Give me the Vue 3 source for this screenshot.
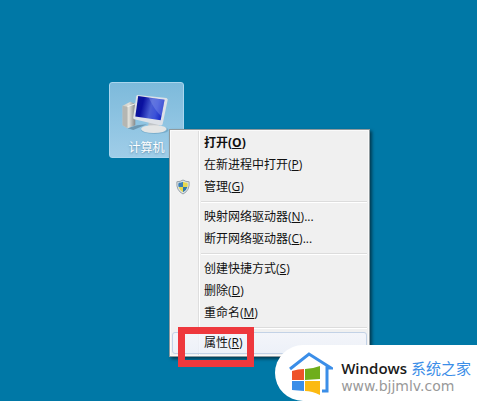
<script setup>
import { ref } from "vue";

// 右键菜单分组
const groups = [
  [
    { name: "打开", key: "O", bold: true },
    { name: "在新进程中打开", key: "P" },
    { name: "管理", key: "G", shield: true },
  ],
  [
    { name: "映射网络驱动器", key: "N", more: true },
    { name: "断开网络驱动器", key: "C", more: true },
  ],
  [
    { name: "创建快捷方式", key: "S" },
    { name: "删除", key: "D" },
    { name: "重命名", key: "M" },
  ],
  [{ name: "属性", key: "R" }],
];

// 当前高亮的菜单项
const active = ref("R");
</script>

<template>
  <main class="desktop">
    <button class="shortcut" type="button">
      <svg class="computer" viewBox="0 0 52 42" aria-hidden="true">
        <defs>
          <linearGradient id="screen" x1="0" y1="0" x2="1" y2="0.2">
            <stop offset="0" stop-color="#0b1590" />
            <stop offset="0.3" stop-color="#0a10a0" />
            <stop offset="0.6" stop-color="#4a5fd4" />
            <stop offset="0.8" stop-color="#3b52d8" />
            <stop offset="1" stop-color="#1a2cc8" />
          </linearGradient>
          <linearGradient id="tower" x1="0" y1="0" x2="1" y2="0">
            <stop offset="0" stop-color="#c9cac4" />
            <stop offset="0.5" stop-color="#e0e0da" />
            <stop offset="1" stop-color="#85898a" />
          </linearGradient>
        </defs>
        <ellipse cx="34" cy="38" rx="14" ry="4" fill="#4f86a8" opacity="0.4" />
        <path d="M6 36 L16 33 L26 32 L12 38 Z" fill="#4a6a80" opacity="0.5" />
        <path d="M1 13 L9 9 L14 11 L14 33 L6 36 L1 33 Z" fill="url(#tower)" />
        <path d="M1 13 L6 14 L6 36 L1 33 Z" fill="#b4b6b2" />
        <path d="M6 14 L14 11" stroke="#f5f5f0" fill="none" />
        <path d="M28 28 L38 30 L39 37 L27 36 Z" fill="#c2c6c9" />
        <ellipse cx="33" cy="37" rx="13" ry="4" fill="#e3e5e5" />
        <path d="M16 2 L46 5 Q48 6 47 8 L42 32 Q41 34 39 33 L13 27 Q11 26 12 24 L15 3 Z" fill="#dde1e7" />
        <path d="M17 3 L44 7 L40 28 L14 24 Z" fill="url(#screen)" />
        <path d="M28 5 L44 7 L41 24 Q34 18 28 5 Z" fill="#93a4f0" opacity="0.35" />
      </svg>
      <span>计算机</span>
    </button>

    <div class="menu" role="menu">
      <div v-for="(group, i) in groups" :key="i" class="group">
        <div
          v-for="item in group"
          :key="item.key"
          class="row"
        >
          <button
            type="button"
            role="menuitem"
            class="item"
            :class="{ bold: item.bold, active: active === item.key }"
            @mouseenter="active = item.key"
          >
            <span class="icon">
              <svg v-if="item.shield" class="shield" viewBox="0 0 16 18" aria-hidden="true">
                <path d="M8 1 Q11 3 15 3 Q16 13 8 17 Q0 13 1 3 Q5 3 8 1 Z" fill="#dfe6ea" stroke="#8b979e" />
                <path d="M8 3 L8 9 L3 9 Q2 7 3 4 Q6 4 8 3 Z" fill="#3b7fb5" />
                <path d="M8 3 Q10 4 13 4 Q14 7 13 9 L8 9 Z" fill="#e6d84e" />
                <path d="M3 9 L8 9 L8 15 Q4 13 3 9 Z" fill="#e6d84e" />
                <path d="M8 9 L13 9 Q12 13 8 15 Z" fill="#2f78a8" />
              </svg>
            </span>
            <span>{{ item.name }}(<u>{{ item.key }}</u>)<template v-if="item.more">...</template></span>
          </button>
          <!-- 红色标注框 -->
          <div v-if="item.key === 'R'" class="mark"></div>
        </div>
      </div>
    </div>

    <div class="brand">
      <svg class="logo" viewBox="0 0 44 46" aria-hidden="true">
        <path d="M1 20 L20 5 L42 19 L38 19 L38 42 L33 42" fill="none" stroke="#3b8ee8" stroke-width="3" />
        <path d="M3 22 Q9 20 15 20 L15 31 L3 31 Z" fill="#ee5329" />
        <path d="M16 20 Q23 20 31 17 L31 30 L16 31 Z" fill="#6fae1c" />
        <path d="M3 32 L15 32 L15 42 L3 41 Z" fill="#3b8ee8" />
        <path d="M16 32 L31 32 L31 46 Q23 42 16 42 Z" fill="#fcba12" />
      </svg>
      <div class="brand-text">
        <div class="brand-name">Windows <span>系统之家</span></div>
        <div class="brand-url">www.bjjmlv.com</div>
      </div>
    </div>
  </main>
</template>

<style>
body {
  margin: 0;
}
</style>

<style scoped>
.desktop {
  position: relative;
  min-height: 100vh;
  overflow: hidden;
  background: #0078a6;
  font-family: "Open Sans", "Noto Sans CJK SC", sans-serif;
  font-size: 12px;
}

button {
  margin: 0;
  padding: 0;
  font: inherit;
  cursor: default;
}

/* 桌面图标 */
.shortcut {
  position: absolute;
  top: 82px;
  left: 109px;
  display: flex;
  flex-direction: column;
  align-items: center;
  width: 75px;
  height: 76px;
  padding-top: 10px;
  box-sizing: border-box;
  border: 1px solid #a9d6ee;
  border-radius: 3px;
  background: linear-gradient(#7dbadb, #9fcde8);
  color: #fff;
  line-height: 18px;
  text-shadow: 0 1px 2px #5d8fae;
}

.computer {
  width: 52px;
  height: 42px;
  margin-bottom: 5px;
}

/* 右键菜单 */
.menu {
  position: absolute;
  top: 129px;
  left: 169px;
  width: 201px;
  padding: 2px;
  box-sizing: border-box;
  border: 1px solid #8f9a9e;
  background: linear-gradient(90deg, #f1f1f1 28px, #dedede 28px, #dedede 29px, #fff 29px, #fff 30px, #f0f0f0 30px);
  box-shadow: inset 0 0 0 1px #fafafa, 2px 2px 3px rgba(0, 0, 0, 0.5);
}

.group + .group::before {
  content: "";
  display: block;
  height: 1px;
  margin: 3px 0 3px 29px;
  border-bottom: 1px solid #fff;
  background: #dcdcdc;
}

.row {
  position: relative;
}

.item {
  display: flex;
  align-items: center;
  width: 100%;
  height: 22px;
  border: 1px solid transparent;
  border-radius: 3px;
  background: none;
  color: #111;
  line-height: 18px;
  text-align: left;
  white-space: nowrap;
}

.item.bold {
  font-weight: 700;
}

.item.active {
  border-color: #c3d2e6;
  background: linear-gradient(rgba(244, 246, 252, 0.8), rgba(236, 241, 250, 0.8));
}

.icon {
  display: flex;
  width: 28px;
  padding-left: 3px;
}

.shield {
  width: 14px;
  height: 16px;
}

.mark {
  position: absolute;
  top: -5px;
  left: 6px;
  width: 76px;
  height: 40px;
  box-sizing: border-box;
  border: 7px solid #ee383d;
}

/* 右下角站点标识 */
.brand {
  position: absolute;
  right: 0;
  bottom: 0;
  display: flex;
  gap: 8px;
  padding: 5px 6px 6px 14px;
  border-radius: 32px 0 0 32px;
  background: #fff;
}

.logo {
  width: 44px;
  height: 46px;
  margin-top: -1px;
}

.brand-text {
  padding-top: 8px;
  white-space: nowrap;
}

.brand-name {
  color: #1a1a1a;
  font-size: 15px;
  font-weight: 600;
  line-height: 20px;
}

.brand-name span {
  color: #3b8ee8;
  font-weight: 400;
}

.brand-url {
  color: #999;
  font-family: "DejaVu Sans", sans-serif;
  font-size: 14px;
  line-height: 16px;
}
</style>
